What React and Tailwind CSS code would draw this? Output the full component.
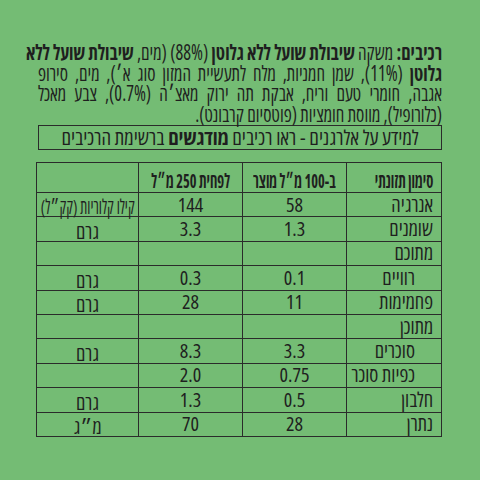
import React from "react";

const rows = [
  { label: "אנרגיה", per100: "58", perCan: "144", unit: "קילו קלוריות (קק״ל)", narrow: true },
  { label: "שומנים", per100: "1.3", perCan: "3.3", unit: "גרם" },
  { label: "מתוכם", per100: "", perCan: "", unit: "" },
  { label: "רוויים", per100: "0.1", perCan: "0.3", unit: "גרם", indent: true },
  { label: "פחמימות", per100: "11", perCan: "28", unit: "גרם" },
  { label: "מתוכן", per100: "", perCan: "", unit: "" },
  { label: "סוכרים", per100: "3.3", perCan: "8.3", unit: "גרם", indent: true },
  { label: "כפיות סוכר", per100: "0.75", perCan: "2.0", unit: "", indent: true },
  { label: "חלבון", per100: "0.5", perCan: "1.3", unit: "גרם" },
  { label: "נתרן", per100: "28", perCan: "70", unit: "מ״ג" },
];

const cell = "bg-[#74bc74] flex items-center";

export default function App() {
  return (
    <div
      dir="rtl"
      className="w-[480px] h-[480px] overflow-hidden bg-[#74bc74] text-[#1f1f1f] pl-[38px] pr-[38px] pt-[42px]"
      style={{ fontFamily: '"Open Sans", sans-serif', fontStretch: "75%" }}
    >
      {/* ingredients, lines broken as on the label */}
      <div className="w-[404px]">
        <div className="w-[465px] origin-right scale-x-[0.869] text-[21px] leading-[20.5px] whitespace-nowrap">
          <div className="text-justify [text-align-last:justify]">
            <b>רכיבים:</b> משקה <b>שיבולת שועל ללא גלוטן</b> (88%) (מים, <b>שיבולת שועל ללא</b>
          </div>
          <div className="text-justify [text-align-last:justify]">
            <b>גלוטן</b> (11%), שמן חמניות, מלח לתעשיית המזון סוג א׳), מים, סירופ
          </div>
          <div className="text-justify [text-align-last:justify]">
            אגבה, חומרי טעם וריח, אבקת תה ירוק מאצ׳ה (0.7%), צבע מאכל
          </div>
          <div>(כלורופיל), מווסת חומציות (פוטסיום קרבונט).</div>
        </div>
      </div>

      <div className="mt-px w-[404px] h-[25px] border border-[#2b2b2b] flex items-center justify-center text-[20.5px] leading-none">
        <span>
          למידע על אלרגנים - ראו רכיבים <b>מודגשים</b> ברשימת הרכיבים
        </span>
      </div>

      <div className="mt-[12px] w-[406px] grid grid-cols-[94px_103px_103px_101px] grid-rows-[29px_repeat(10,23.4px)] gap-px p-px bg-[#2b2b2b] text-[20px] leading-none">
        <div className={`${cell} pr-[8px] pt-[6px] font-bold whitespace-nowrap`}>
          <span className="inline-block origin-right scale-x-[0.72]">סימון תזונתי</span>
        </div>
        <div className={`${cell} justify-center pt-[6px] font-bold whitespace-nowrap`}>
          <span className="inline-block scale-x-[0.72]">ב-100 מ״ל מוצר</span>
        </div>
        <div className={`${cell} justify-center pt-[6px] font-bold whitespace-nowrap`}>
          <span className="inline-block scale-x-[0.72]">לפחית 250 מ״ל</span>
        </div>
        <div className="bg-[#74bc74]"></div>
        {rows.map((r) => (
          <React.Fragment key={r.label}>
            <div className={`${cell} whitespace-nowrap ${r.indent ? "pr-[26px]" : "pr-[8px]"}`}>{r.label}</div>
            <div className={`${cell} justify-center`}>{r.per100}</div>
            <div className={`${cell} justify-center`}>{r.perCan}</div>
            <div className="bg-[#74bc74] flex items-end justify-center whitespace-nowrap">
              <span className={`inline-block translate-y-[1px] ${r.narrow ? "scale-x-[0.76]" : ""}`}>{r.unit}</span>
            </div>
          </React.Fragment>
        ))}
      </div>
    </div>
  );
}
